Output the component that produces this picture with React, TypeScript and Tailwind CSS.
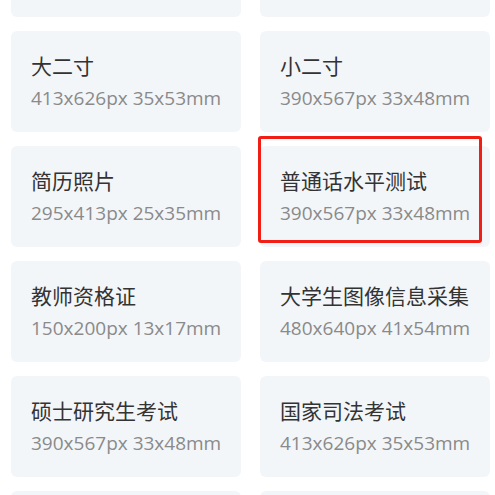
import React from "react";

const items = [
  { t: "一寸", s: "295x413px 25x35mm" },
  { t: "二寸", s: "413x579px 35x49mm" },
  { t: "大二寸", s: "413x626px 35x53mm" },
  { t: "小二寸", s: "390x567px 33x48mm" },
  { t: "简历照片", s: "295x413px 25x35mm" },
  { t: "普通话水平测试", s: "390x567px 33x48mm", mark: true },
  { t: "教师资格证", s: "150x200px 13x17mm" },
  { t: "大学生图像信息采集", s: "480x640px 41x54mm" },
  { t: "硕士研究生考试", s: "390x567px 33x48mm" },
  { t: "国家司法考试", s: "413x626px 35x53mm" },
  { t: "英语四六级", s: "144x192px 12x16mm" },
  { t: "护士执业资格", s: "160x210px 14x18mm" },
];

export default function App() {
  return (
    <div className="h-[495px] w-[495px] overflow-hidden bg-white" style={{ fontFamily: '"Noto Sans CJK SC", "Noto Sans", sans-serif' }}>
      <div className="-mt-[84px] grid grid-cols-[230px_230px] gap-x-[19px] gap-y-[14px] pl-[11px]">
        {items.map((it, i) => (
          <div key={i} className="relative flex h-[101px] flex-col justify-center rounded-[6px] bg-[#f3f6f9] pl-[20px]">
            <div className="text-[21px] leading-[30px] text-[#333333]">{it.t}</div>
            <div className="mt-[3px] font-['Open_Sans','Noto_Sans_CJK_SC',sans-serif] text-[19px] leading-[30px] text-[#8a8a8a]">{it.s}</div>
            {it.mark && (
              <div className="absolute left-[-2px] top-[-10px] h-[107px] w-[224px] rounded-[3px] border-[3px] border-[#f01e14]" />
            )}
          </div>
        ))}
      </div>
    </div>
  );
}
